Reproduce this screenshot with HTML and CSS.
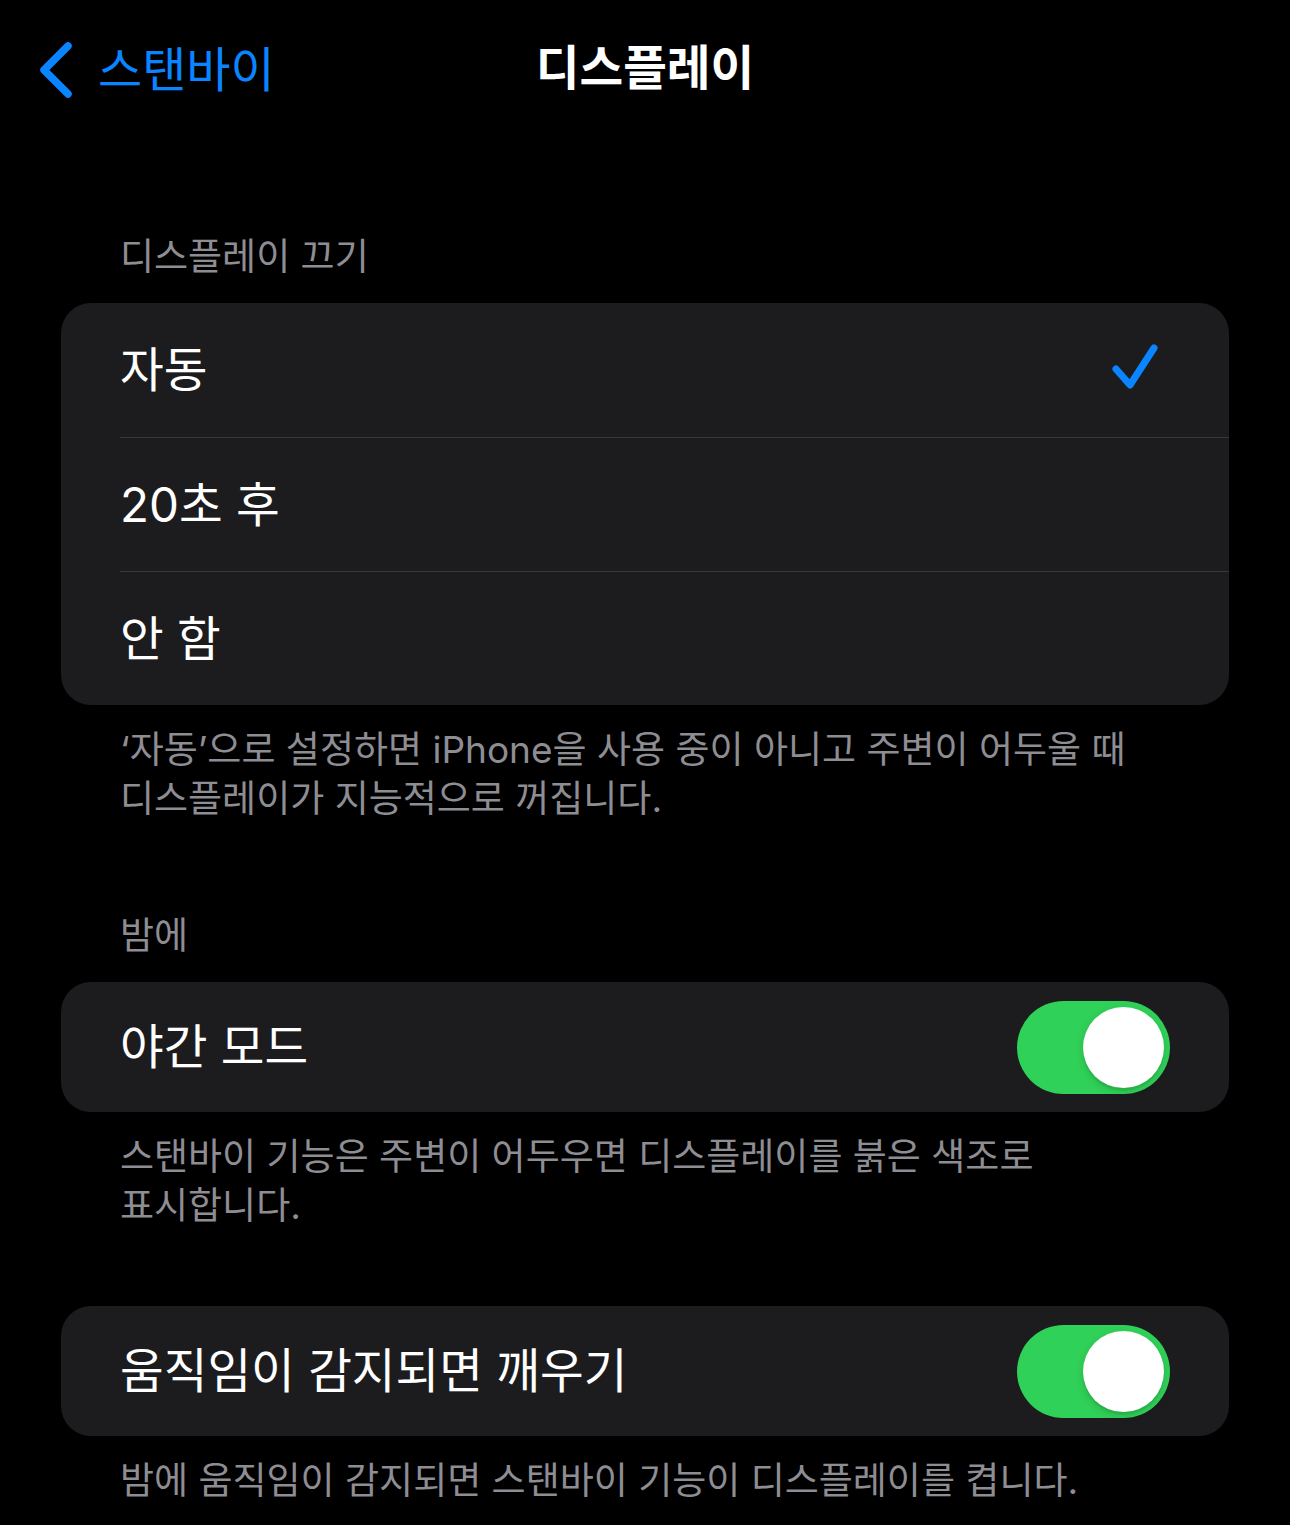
FILE: index.html
```html
<!DOCTYPE html>
<html lang="ko">
<head>
    <meta charset="utf-8">
    <title>디스플레이</title>
    <link rel="stylesheet" href="styles.css">
</head>
<body>
    <div class="nav">
        <a class="back" href="#">
            <svg class="chevron" width="40" height="60" viewBox="0 0 40 60">
                <path d="M30 6 L6 30 L30 54" fill="none" stroke="#0a84ff" stroke-width="7.5" stroke-linecap="round" stroke-linejoin="round"/>
            </svg>
            <span>스탠바이</span>
        </a>
        <div class="title">디스플레이</div>
    </div>

    <div class="content">
        <div class="group-header first">디스플레이 끄기</div>
        <div class="card">
            <div class="row">
                <span class="label">자동</span>
                <svg class="check" width="52" height="52" viewBox="0 0 52 52">
                    <path d="M5 25 L19 41 L43 4" fill="none" stroke="#0a84ff" stroke-width="7" stroke-linecap="round" stroke-linejoin="round"/>
                </svg>
            </div>
            <div class="row">
                <span class="label">20초 후</span>
            </div>
            <div class="row">
                <span class="label">안 함</span>
            </div>
        </div>
        <div class="group-footer">‘자동’으로 설정하면 iPhone을 사용 중이 아니고 주변이 어두울 때<br>디스플레이가 지능적으로 꺼집니다.</div>

        <div class="group-header">밤에</div>
        <div class="card">
            <div class="row single">
                <span class="label">야간 모드</span>
                <div class="switch on"><div class="knob"></div></div>
            </div>
        </div>
        <div class="group-footer">스탠바이 기능은 주변이 어두우면 디스플레이를 붉은 색조로<br>표시합니다.</div>

        <div class="card spaced">
            <div class="row single">
                <span class="label">움직임이 감지되면 깨우기</span>
                <div class="switch on"><div class="knob"></div></div>
            </div>
        </div>
        <div class="group-footer">밤에 움직임이 감지되면 스탠바이 기능이 디스플레이를 켭니다.</div>
    </div>
</body>
</html>
```

FILE: styles.css
```css
body {
    margin: 0;
    background: #000;
    color: #fff;
    font-family: "Inter", "Noto Sans CJK KR", sans-serif;
}

.nav {
    position: relative;
    height: 140px;
    display: flex;
    align-items: center;
    justify-content: center;
}

.back {
    position: absolute;
    left: 38px;
    top: 40px;
    display: flex;
    align-items: center;
    gap: 20px;
    color: #0a84ff;
    text-decoration: none;
    font-size: 48px;
    line-height: 60px;
}

.chevron {
    display: block;
}

.title {
    font-size: 47.5px;
    font-weight: 700;
    line-height: 60px;
    margin-top: -4px;
}

.content {
    padding: 0 61px;
}

.group-header {
    color: #8d8d93;
    font-size: 37px;
    line-height: 48px;
    padding: 89px 0 22px 59px;
}

.group-header.first {
    padding-top: 93px;
}

.card {
    background: #1c1c1e;
    border-radius: 30px;
    overflow: hidden;
}

.card.spaced {
    margin-top: 76px;
}

.row {
    height: 134px;
    margin-left: 59px;
    padding-right: 59px;
    display: flex;
    align-items: center;
    justify-content: space-between;
    border-top: 1px solid #38383a;
    box-sizing: border-box;
}

.row:first-child {
    border-top: none;
}

.row.single {
    height: 130px;
}

.label {
    font-size: 47.5px;
    line-height: 60px;
}

.check {
    margin-right: 7px;
}

.group-footer {
    color: #8d8d93;
    font-size: 37px;
    line-height: 49px;
    padding: 20px 0 0 59px;
}

.switch {
    width: 153px;
    height: 93px;
    border-radius: 47px;
    background: #39393d;
    position: relative;
}

.switch.on {
    background: #30d158;
}

.knob {
    position: absolute;
    top: 6px;
    left: 6px;
    width: 81px;
    height: 81px;
    border-radius: 50%;
    background: #fff;
    box-shadow: 0 3px 8px rgba(0, 0, 0, 0.15), 0 3px 1px rgba(0, 0, 0, 0.06);
}

.switch.on .knob {
    left: 66px;
}
```
